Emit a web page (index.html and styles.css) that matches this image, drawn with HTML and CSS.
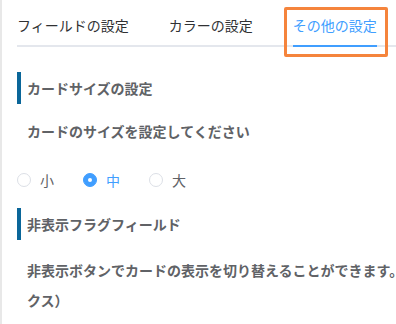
FILE: index.html
```html
<!DOCTYPE html>
<html lang="ja">
<head>
    <meta charset="UTF-8">
    <meta name="viewport" content="width=device-width, initial-scale=1.0">
    <title>設定</title>
    <link rel="stylesheet" href="styles.css">
</head>
<body>
    <div class="panel">
        <div class="tabs">
            <div class="tab">フィールドの設定</div>
            <div class="tab">カラーの設定</div>
            <div class="tab active">その他の設定<span class="highlight"></span></div>
        </div>

        <div class="section-title">カードサイズの設定</div>
        <p class="desc">カードのサイズを設定してください</p>
        <div class="radio-group">
            <label class="radio"><span class="radio-inner"></span><span class="radio-label">小</span></label>
            <label class="radio checked"><span class="radio-inner"></span><span class="radio-label">中</span></label>
            <label class="radio"><span class="radio-inner"></span><span class="radio-label">大</span></label>
        </div>

        <div class="section-title second">非表示フラグフィールド</div>
        <p class="desc wide">非表示ボタンでカードの表示を切り替えることができます。（チェックボックス）</p>
    </div>
</body>
</html>
```

FILE: styles.css
```css
html {
    overflow: hidden;
}
body {
    margin: 0;
    background-color: #fff;
    font-family: "Noto Sans CJK JP", "Noto Sans", sans-serif;
    font-size: 14px;
    color: #606266;
}
.panel {
    border-left: 2px solid #e8e8e8;
    padding-left: 15px;
    min-height: 324px;
    width: 700px;
}

.tabs {
    display: flex;
    padding-top: 5px;
    border-bottom: 2px solid #e4e7ed;
}
.tab {
    position: relative;
    height: 40px;
    line-height: 40px;
    padding: 0 20px;
    color: #303133;
}
.tab:first-child {
    padding-left: 0;
}
.tab.active {
    color: #409eff;
    padding-right: 0;
}
.tab.active::after {
    content: "";
    position: absolute;
    left: 20px;
    right: 0;
    bottom: -2px;
    height: 2px;
    background-color: #409eff;
}
.highlight {
    position: absolute;
    left: 11px;
    right: -11px;
    top: 2px;
    height: 50px;
    border: 3px solid #f5843c;
    border-radius: 2px;
    box-sizing: border-box;
}

.section-title {
    margin-top: 25px;
    height: 32px;
    line-height: 32px;
    border-left: 4px solid #0a6699;
    padding-left: 6px;
    font-weight: bold;
}
.section-title.second {
    margin-top: 18px;
}

.desc {
    margin: 12px 0 0;
    padding-left: 10px;
    line-height: 30px;
    font-weight: bold;
}
.desc.wide {
    margin-top: 15px;
    width: 480px;
}

.radio-group {
    display: flex;
    align-items: center;
    gap: 29px;
    margin-top: 24px;
    height: 20px;
}
.radio {
    display: flex;
    align-items: center;
    cursor: pointer;
}
.radio-inner {
    width: 14px;
    height: 14px;
    border: 1px solid #dcdfe6;
    border-radius: 50%;
    box-sizing: border-box;
    position: relative;
}
.radio-label {
    padding-left: 9px;
    line-height: 20px;
}
.radio.checked .radio-inner {
    border-color: #409eff;
    background-color: #409eff;
}
.radio.checked .radio-inner::after {
    content: "";
    position: absolute;
    left: 50%;
    top: 50%;
    width: 4px;
    height: 4px;
    margin: -2px 0 0 -2px;
    border-radius: 50%;
    background-color: #fff;
}
.radio.checked .radio-label {
    color: #409eff;
}
```
